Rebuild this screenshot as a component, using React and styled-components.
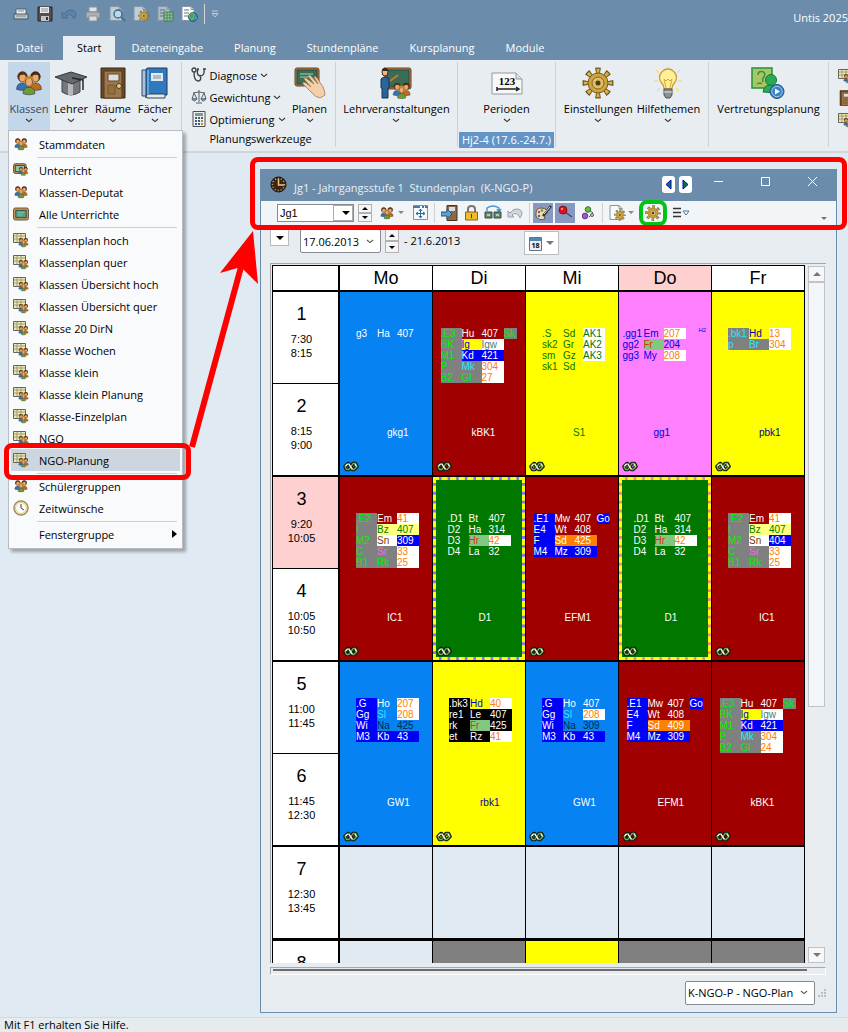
import React from 'react'
import styled, { createGlobalStyle } from 'styled-components'

const GlobalStyle = createGlobalStyle`
  * { box-sizing: border-box; }
  body {
    margin: 0;
    overflow: hidden;
    font-family: "Open Sans", "Noto Sans", sans-serif;
    font-size: 11px;
    color: #000;
  }
  button, select, input {
    font: inherit;
    color: inherit;
    margin: 0;
    padding: 0;
    border: 0;
    background: none;
  }
  svg { display: block; flex: none; }
`

const App = () => (
  <>
    <GlobalStyle />
    <Page>
      <TitleBar>
        <QuickAccess>
          {quickItems.map(({ name, icon }) => (
            <QuickButton key={name} aria-label={name}>{icon}</QuickButton>
          ))}
          <QuickMore aria-label='Mehr'>
            <svg width='8' height='8' viewBox='0 0 8 8'><path d='M1 1h6M1 3.5h6L4 7z' fill='none' stroke='#d4c8c4' /></svg>
          </QuickMore>
        </QuickAccess>
        <AppName>Untis 2025</AppName>
      </TitleBar>
      <Tabs>
        {tabs.map(tab => <Tab key={tab} $active={tab === 'Start'}>{tab}</Tab>)}
      </Tabs>
      <Ribbon />
      <Workspace>
        <TimetableWindow />
      </Workspace>
      <StatusBar>Mit F1 erhalten Sie Hilfe.</StatusBar>
      <KlassenMenu />
      <WindowMark />
      <Arrow width='60' height='218' viewBox='0 0 60 218'>
        <path d='M3 216L52 36' stroke='#f00' strokeWidth='6' />
        <path d='M64 0L31 42L52 36L69 53z' fill='#f00' />
      </Arrow>
    </Page>
  </>
)

const Page = styled.div`
  position: relative;
  display: flex;
  flex-direction: column;
  height: 100vh;
  background: #e0eaf3;
  overflow: hidden;
`
const TitleBar = styled.header`
  display: flex;
  align-items: center;
  height: 36px;
  padding: 0 0 8px 10px;
  background: #6b8dab;
`
const QuickAccess = styled.div`
  display: flex;
  align-items: center;
  gap: 2px;
`
const QuickButton = styled.button`
  display: grid;
  place-items: center;
  width: 22px;
  height: 20px;
`
const QuickMore = styled.button`
  height: 20px;
  margin-left: 2px;
  padding-left: 6px;
  border-left: 1px solid #d8d4d4;
`
const AppName = styled.span`
  margin-left: auto;
  padding-top: 6px;
  color: #fff;
  white-space: nowrap;
`
const Tabs = styled.nav`
  display: flex;
  gap: 1px;
  height: 24px;
  padding-left: 1px;
  background: #6b8dab;
`
const Tab = styled.button`
  padding: 0 15px 1px;
  color: #fff;
  ${props => props.$active && `
    margin-left: 4px;
    padding: 0 14px 1px;
    background: #e8edf1;
    color: #000;
  `}
`
const StatusBar = styled.footer`
  height: 15px;
  padding-left: 4px;
  line-height: 13px;
  border-top: 1px solid #d8d8dc;
  background: #e6ebee;
`
const WindowMark = styled.div`
  position: absolute;
  top: 157px;
  left: 250px;
  right: 1px;
  height: 73px;
  border: 5px solid #f00;
  border-radius: 8px;
  pointer-events: none;
`
const Arrow = styled.svg`
  position: absolute;
  top: 231px;
  left: 189px;
  overflow: visible;
  pointer-events: none;
`

/* Icons */

const Chevron = ({ color = '#333' }) => (
  <svg width='8' height='5' viewBox='0 0 8 5'><path d='M1 1l3 2.6L7 1' fill='none' stroke={color} strokeWidth='1.1' /></svg>
)
const Triangle = ({ color = '#000', up, size = 8 }) => (
  <svg width={size} height={size / 2} viewBox='0 0 8 4'><path d={up ? 'M0 4L4 0L8 4z' : 'M0 0L4 4L8 0z'} fill={color} /></svg>
)

const PersonShape = ({ x, y, hair, body }) => (
  <g transform={`translate(${x} ${y})`}>
    <path d='M-5.500 12Q-5.500 6 0 6T5.500 12Q0 14-5.500 12' fill={body} stroke='#3b3f48' strokeWidth='.6' />
    <circle r='4.800' fill={hair} />
    <ellipse cy='1.200' rx='3.200' ry='3.900' fill='#e5ab72' stroke='#6c3d18' strokeWidth='.7' />
    <path d='M-3.500-1Q0-5 3.500-1L1-2z' fill={hair} />
  </g>
)
const People = ({ size = 26 }) => (
  <svg width={size} height={size} viewBox='0 0 26 26'>
    <PersonShape x={7} y={7} hair='#5a2b10' body='#3572b0' />
    <PersonShape x={19} y={7} hair='#48220f' body='#c06a1c' />
    <PersonShape x={13} y={11} hair='#c98f35' body='#6c9c33' />
  </svg>
)
const Cap = () => (
  <svg width='32' height='32' viewBox='0 0 32 32'>
    <path d='M7 13h18v12q-9 6-18 0z' fill='#74777c' stroke='#424448' />
    <path d='M13 16h5v12h-5z' fill='#b5b8bc' />
    <path d='M0 10L16 5L32 10L17 17z' fill='#66696e' stroke='#35373b' />
    <path d='M17 11L28 13V23' fill='none' stroke='#26282b' strokeWidth='1.500' />
  </svg>
)
const Door = ({ size = 32 }) => (
  <svg width={size} height={size} viewBox='0 0 32 32'>
    <path d='M4 1h24v30H4z' fill='#6b4a2b' stroke='#38260f' />
    <path d='M7 4h18v27H7z' fill='#9d7649' stroke='#513820' />
    <path d='M11 7h11v7H11z' fill='#dbe0df' stroke='#5f4b30' />
    <path d='M11 18h7v9h-7z' fill='#94703f' stroke='#765630' />
    <circle cx='22' cy='19' r='2.500' fill='#e7ce7e' stroke='#4a391c' />
  </svg>
)
const Books = () => (
  <svg width='32' height='32' viewBox='0 0 32 32'>
    <path d='M3 3h21v26H3z' fill='#a9c3dc' stroke='#32495f' />
    <path d='M7 3q0-2 2-2h19v27H9q-2 0-2 3z' fill='#2f79c1' stroke='#1e3853' />
    <path d='M7 29q1-3 4-2h15v4H8z' fill='#e6e9e9' stroke='#29445f' />
    <path d='M12 6h12v8H12z' fill='#e4ebf0' />
    <path d='M14 9h8M14 11h8' stroke='#7d8c99' />
    <path d='M9 3v24' stroke='#79b2e4' strokeWidth='1.500' />
  </svg>
)
const Stethoscope = () => (
  <svg width='16' height='16' viewBox='0 0 16 16' fill='none' stroke='#3f4246' strokeWidth='1.400'>
    <circle cx='3' cy='3' r='2' /><path d='M3 5Q3 14 7 14T9 8M7 2q-2 6 2 7q5 0 4-7M6 2h2M12 2h3' />
  </svg>
)
const Scales = () => (
  <svg width='16' height='16' viewBox='0 0 16 16' fill='none' stroke='#55616a'>
    <path d='M8 1v12M2 4Q8 2 14 4M5 14h6M3 4L1 10h5zM13 4L10 10h5z' /><path d='M1 10q2 4 5 0zM10 10q2 4 5 0z' fill='#a9bcc9' />
  </svg>
)
const Calculator = () => (
  <svg width='16' height='16' viewBox='0 0 16 16'>
    <path d='M2 .5h12v15H2z' fill='#f0f1f0' stroke='#494f55' />
    <path d='M4 2h8v3H4z' fill='#7c9b88' />
    <path d='M4 7h2M7 7h2M10 7h2M4 10h2M7 10h2M4 13h2M7 13h2' stroke='#3e5e80' strokeWidth='1.800' />
    <path d='M10 10h2M10 13h2' stroke='#c18a25' strokeWidth='1.800' />
  </svg>
)
const BoardShape = ({ w = 26, h = 18 }) => (
  <g><rect x='1' y='1' width={w} height={h} rx='2' fill='#b47c43' stroke='#664224' /><rect x='3' y='3' width={w - 4} height={h - 4} fill='#386c55' stroke='#264c3c' /></g>
)
const Board = () => (
  <svg width='16' height='14' viewBox='0 0 28 23'>
    <rect x='1' y='1' width='26' height='21' rx='3' fill='#c89a55' stroke='#5e3f20' strokeWidth='1.500' />
    <rect x='5' y='5' width='18' height='13' fill='#55a08a' stroke='#24473a' strokeWidth='1.500' />
    <path d='M8 9h12M8 13h9' stroke='#a6dcc0' />
  </svg>
)
const HandBoard = () => (
  <svg width='32' height='32' viewBox='0 0 32 32'>
    <BoardShape w={24} h={18} /><path d='M6 7h13M6 10h9' stroke='#a7d4b5' />
    <path d='M9 17Q8 14 12 16L17 20L10 12Q10 10 12 11L20 17L14 9Q15 7 17 9L24 17L20 10Q21 8 23 11L29 20Q31 24 31 28L26 31Q21 30 17 25z' fill='#f4d0aa' stroke='#a57552' strokeWidth='.8' />
  </svg>
)
const Teacher = () => (
  <svg width='32' height='32' viewBox='0 0 32 32'>
    <g transform='translate(4)'><BoardShape w={26} h={21} /></g>
    <path d='M10 14L18 8' stroke='#c97340' strokeWidth='2' />
    <path d='M1 12q4-4 8 0v9H8v10H2V21H1z' fill='#2c6398' stroke='#173452' />
    <ellipse cx='5' cy='5' rx='3' ry='4' fill='#eaba87' stroke='#432414' />
    <path d='M2 4q3-7 6 0z' fill='#48220f' />
    <g transform='translate(12 14) scale(.74)'><People size={26} /></g>
  </svg>
)
const Numbers = () => (
  <svg width='32' height='32' viewBox='0 0 32 32'>
    <path d='M1 6h24l6 6v15H1z' fill='#f8f8f8' stroke='#92989c' /><path d='M25 6v6h6' fill='#dadddf' stroke='#92989c' />
    <text x='16' y='18' fontFamily='Liberation Serif, serif' fontSize='11' fontWeight='bold' textAnchor='middle'>123</text>
    <path d='M6 22h21M6 20v4M25 20l3 2l-3 2' stroke='#222' fill='none' strokeWidth='1.500' />
  </svg>
)
const GearShape = () => (
  <g>
    <circle cx='16' cy='16' r='12.500' fill='none' stroke='#6d5520' strokeWidth='6' pathLength='16' strokeDasharray='1 1' strokeDashoffset='.5' />
    <circle cx='16' cy='16' r='12' fill='none' stroke='#d8b04b' strokeWidth='4.500' pathLength='32' strokeDasharray='1.200 2.800' strokeDashoffset='.6' />
    <circle cx='16' cy='16' r='10' fill='#cda441' stroke='#76591b' />
    <circle cx='16' cy='16' r='6' fill='#dfbe60' stroke='#86672a' />
    <circle cx='16' cy='16' r='2.500' fill='#4d3d1b' />
  </g>
)
const Gear = ({ size = 32 }) => <svg width={size} height={size} viewBox='0 0 32 32'><GearShape /></svg>
const Bulb = () => (
  <svg width='32' height='32' viewBox='0 0 32 32'>
    <path d='M16 0v3M4 3l3 3M28 3l-3 3M2 14h4M26 14h4M5 24l3-3M27 24l-3-3' stroke='#f5d36b' />
    <path d='M12 22Q12 18 9 15Q6 10 9 6Q12 2 16 2T23 6Q26 10 23 15Q20 18 20 22z' fill='#fff09a' stroke='#cf9d31' strokeWidth='1.300' />
    <path d='M14 21L12 12L14 14L16 12L18 14L20 12L18 21' fill='none' stroke='#dfa43a' />
    <path d='M12 22h8v6l-2 3h-4l-2-3z' fill='#8b9093' stroke='#4d5255' /><path d='M12 25h8' stroke='#dce0e1' />
  </svg>
)
const Cover = () => (
  <svg width='34' height='32' viewBox='0 0 34 32'>
    <rect x='1' y='1' width='20' height='20' fill='#a8c762' stroke='#2d954a' strokeWidth='1.600' />
    <path d='M7 8Q7 4 11 4.500T13 10Q11 11 12 15M6 17q3-2 5 0' fill='none' stroke='#3a8f48' strokeWidth='1.500' />
    <circle cx='20' cy='13' r='5.500' fill='#2aaa52' stroke='#17773b' /><path d='M12 25Q13 18 19 18T27 26z' fill='#2aaa52' stroke='#17773b' />
    <circle cx='26' cy='24.500' r='7' fill='#3982c5' stroke='#235785' /><circle cx='26' cy='24.500' r='5.200' fill='none' stroke='#9ac6ec' /><path d='M24 21.500l5 3l-5 3z' fill='#fff' />
  </svg>
)
const PlanTable = () => (
  <svg width='16' height='16' viewBox='0 0 16 16'>
    <path d='M.500 1.500h12v9H.500z' fill='#ece9b6' stroke='#65655a' /><path d='M1 4h11M1 7h11M4 2v8M8 2v8' stroke='#a09d74' />
    <g transform='translate(5 5) scale(.420)'><People size={26} /></g>
  </svg>
)
const BoardPeople = () => (
  <svg width='16' height='14' viewBox='0 0 28 24'>
    <rect x='1' y='1' width='22' height='17' rx='3' fill='#c89a55' stroke='#5e3f20' strokeWidth='1.500' />
    <rect x='4' y='4' width='16' height='11' fill='#8fc0b0' stroke='#24473a' strokeWidth='1.500' />
    <g transform='translate(9 5) scale(.700)'><People size={26} /></g>
  </svg>
)
const Clock = () => (
  <svg width='16' height='16' viewBox='0 0 16 16'><circle cx='8' cy='8' r='7' fill='#f9fbfc' stroke='#a1905a' strokeWidth='1.500' /><circle cx='8' cy='8' r='5.500' fill='none' stroke='#e4ce76' /><path d='M8 4v4l3 2' fill='none' stroke='#444' /></svg>
)
const Folder = () => (
  <svg width='16' height='16' viewBox='0 0 16 16'><path d='M3 3h10v6H3z' fill='#edf1f3' stroke='#52616c' /><path d='M1 8h14v5H1z' fill='#c2cbd1' stroke='#475560' /><path d='M5 5h6M3 10h10' stroke='#7c8992' /></svg>
)
const Save = () => (
  <svg width='16' height='16' viewBox='0 0 16 16'><path d='M1 1h14v14H1z' fill='#55504d' stroke='#262524' /><path d='M3 1h9v6H3z' fill='#eceeee' /><path d='M4 10h8v5H4z' fill='#c0c4c6' /><path d='M9 11h2v3H9z' fill='#333' /><path d='M4 3h7M4 5h7' stroke='#9c8b8b' /></svg>
)
const Undo = ({ color = '#6187ac' }) => (
  <svg width='17' height='14' viewBox='0 0 17 14'><path d='M1 5v6h6L5 9q5-4 8 3q5-7-2-9Q7 2 3 7z' fill={color} fillOpacity='.35' stroke={color} /></svg>
)
const Printer = () => (
  <svg width='16' height='16' viewBox='0 0 16 16'><path d='M4 1h8v5H4zM4 10h8v5H4z' fill='#dfe2e5' stroke='#88929c' /><path d='M1 6h14v6H1z' fill='#aab1b8' stroke='#7d8790' /><path d='M4 10h8v5H4z' fill='#d8dcdf' stroke='#88929c' /></svg>
)
const Sheet = ({ children, back = '#d9e3ea' }) => (
  <svg width='17' height='16' viewBox='0 0 17 16'><path d='M1 .500h9l3 3v11H1z' fill={back} stroke='#8596a4' /><path d='M10 .500v3h3' fill='none' stroke='#8596a4' />{children}</svg>
)
const MiniGear = () => <g transform='translate(5 4) scale(.370)'><GearShape /></g>
const quickItems = [
  { name: 'Öffnen', icon: <Folder /> },
  { name: 'Speichern', icon: <Save /> },
  { name: 'Rückgängig', icon: <Undo color='#466f9a' /> },
  { name: 'Drucken', icon: <Printer /> },
  { name: 'Vorschau', icon: <Sheet back='#bfcdd9'><circle cx='9' cy='8' r='4' fill='#b6d9ed' stroke='#3c6287' strokeWidth='1.300' /><path d='M12 11l4 4' stroke='#4d6d8e' strokeWidth='2' /></Sheet> },
  { name: 'Optionen', icon: <Sheet back='#bfcdd9'><MiniGear /></Sheet> },
  { name: 'Kopieren', icon: <Sheet back='#adbdca'><path d='M3 4h5M3 7h4M3 10h4' stroke='#5e7387' /><path d='M7 6h9v9H7z' fill='#9bc6a0' stroke='#3e7a4d' /><path d='M7 9h9M7 12h9M10 6v9M13 6v9' stroke='#4b8a58' /></Sheet> },
  { name: 'Export', icon: <Sheet back='#fff'><path d='M3 4h5M3 7h5M3 10h4' stroke='#657681' /><circle cx='12' cy='11' r='4.500' fill='#3c85bc' stroke='#275d7f' /><path d='M8 10q4-5 5-1l-2 5zM13 12h3' fill='#48a04c' stroke='#6cc35b' /></Sheet> },
]
const tabs = ['Datei', 'Start', 'Dateneingabe', 'Planung', 'Stundenpläne', 'Kursplanung', 'Module']

/* Ribbon */

const RibbonBar = styled.div`
  display: flex;
  flex: none;
  height: 93px;
  padding: 2px 0 4px 1px;
  border-bottom: 2px solid #d2d4d8;
  background: #e8edf1;
  overflow: hidden;
`
const Group = styled.section`
  display: flex;
  flex: none;
  justify-content: center;
  flex-wrap: wrap;
  align-content: flex-start;
  column-gap: ${props => props.$gap || 0}px;
  width: ${props => props.$width}px;
  padding-left: ${props => props.$left || 0}px;
  border-right: 1px solid #ccd1d6;
`
const BigButton = styled.button`
  display: flex;
  flex-direction: column;
  align-items: center;
  gap: 2px;
  min-width: 42px;
  height: 68px;
  padding-top: 5px;
  line-height: 15px;
  white-space: nowrap;
  ${props => props.$open && 'background: #c3d6ea; color: #3c4654;'}
`
const BigIcon = styled.span`
  display: grid;
  place-items: center;
  height: 32px;
`
const ToolStack = styled.div`
  display: flex;
  flex-direction: column;
  width: 98px;
  padding-top: 2px;
`
const ToolButton = styled.button`
  display: flex;
  align-items: center;
  gap: 3px;
  height: 22px;
`
const GroupTitle = styled.div`
  width: 100%;
  margin-top: ${props => (props.$chip ? 2 : 1)}px;
  line-height: 16px;
  text-align: center;
`
const PeriodChip = styled.span`
  display: inline-block;
  padding: 0 3px;
  background: #6494c6;
  color: #fff;
`
const EdgeIcons = styled.div`
  display: flex;
  flex-direction: column;
  gap: 6px;
  padding: 6px 0 0 9px;
`
const BigItem = ({ label, icon, open, plain }) => (
  <BigButton $open={open}>
    <BigIcon>{icon}</BigIcon>
    <span>{label}</span>
    {!plain && <Chevron />}
  </BigButton>
)
const Ribbon = () => (
  <RibbonBar>
    <Group $width={181} $left={2}>
      <BigItem label='Klassen' icon={<People size={28} />} open />
      <BigItem label='Lehrer' icon={<Cap />} />
      <BigItem label='Räume' icon={<Door />} />
      <BigItem label='Fächer' icon={<Books />} />
    </Group>
    <Group $width={154} $left={4}>
      <ToolStack>
        <ToolButton><Stethoscope />Diagnose<Chevron /></ToolButton>
        <ToolButton><Scales />Gewichtung<Chevron /></ToolButton>
        <ToolButton><Calculator />Optimierung<Chevron /></ToolButton>
      </ToolStack>
      <BigItem label='Planen' icon={<HandBoard />} />
      <GroupTitle>Planungswerkzeuge</GroupTitle>
    </Group>
    <Group $width={122}>
      <BigItem label='Lehrveranstaltungen' icon={<Teacher />} />
    </Group>
    <Group $width={98}>
      <BigItem label='Perioden' icon={<Numbers />} />
      <GroupTitle $chip><PeriodChip>Hj2-4 (17.6.-24.7.)</PeriodChip></GroupTitle>
    </Group>
    <Group $width={153} $gap={4}>
      <BigItem label='Einstellungen' icon={<Gear />} />
      <BigItem label='Hilfethemen' icon={<Bulb />} />
    </Group>
    <Group $width={120}>
      <BigItem label='Vertretungsplanung' icon={<Cover />} plain />
    </Group>
    <EdgeIcons>
      <PlanTable />
      <Door size={16} />
      <PlanTable />
    </EdgeIcons>
  </RibbonBar>
)

/* Drop-down menu under "Klassen" */

const Menu = styled.div`
  position: absolute;
  top: 130px;
  left: 8px;
  width: 175px;
  padding: 2px 2px 3px;
  border: 1px solid #b9bcc2;
  background: #f8fafc;
  box-shadow: 3px 3px 3px rgba(0, 0, 0, 0.3);
`
const MenuItem = styled.button`
  display: flex;
  align-items: center;
  gap: 10px;
  width: 100%;
  height: 22px;
  padding-left: 2px;
  text-align: left;
  ${props => props.$selected && 'background: #cdd6de;'}
`
const MenuIcon = styled.span`
  display: grid;
  place-items: center;
  width: 16px;
`
const MenuLine = styled.hr`
  height: 1px;
  margin: 2px 3px 1px 26px;
  border: 0;
  background: #cdd0d4;
`
const SubArrow = styled.svg`
  margin: 0 3px 0 auto;
`
const ItemMark = styled.div`
  position: absolute;
  top: 312px;
  left: -5px;
  right: -9px;
  height: 37px;
  border: 5px solid #f00;
  border-radius: 8px;
  pointer-events: none;
`
const menuItems = [
  ['Stammdaten', 'people'], null,
  ['Unterricht', 'boardPeople'], ['Klassen-Deputat', 'people'], ['Alle Unterrichte', 'board'], null,
  ['Klassenplan hoch', 'plan'], ['Klassenplan quer', 'plan'], ['Klassen Übersicht hoch', 'plan'],
  ['Klassen Übersicht quer', 'plan'], ['Klasse 20 DirN', 'plan'], ['Klasse Wochen', 'plan'],
  ['Klasse klein', 'plan'], ['Klasse klein Planung', 'plan'], ['Klasse-Einzelplan', 'plan'],
  ['NGO', 'plan'], ['NGO-Planung', 'plan'], null,
  ['Schülergruppen', 'people'], ['Zeitwünsche', 'clock'], null,
  ['Fenstergruppe', 'none'],
]
const menuIcons = {
  people: <People size={14} />,
  boardPeople: <BoardPeople />,
  board: <Board />,
  plan: <PlanTable />,
  clock: <Clock />,
}
const KlassenMenu = () => (
  <Menu>
    {menuItems.map((item, i) => item ? (
      <MenuItem key={item[0]} $selected={item[0] === 'NGO-Planung'}>
        <MenuIcon>{menuIcons[item[1]]}</MenuIcon>
        {item[0]}
        {item[1] === 'none' && <SubArrow width='5' height='8' viewBox='0 0 5 8'><path d='M0 0L5 4L0 8z' /></SubArrow>}
      </MenuItem>
    ) : <MenuLine key={i} />)}
    <ItemMark />
  </Menu>
)

/* Timetable window */

const Workspace = styled.main`
  display: flex;
  flex: 1;
  min-height: 0;
  padding: 16px 11px 4px 260px;
`
const Window = styled.section`
  display: flex;
  flex: 1;
  flex-direction: column;
  min-width: 0;
  border: 1px solid #6b8dab;
  background: #e6ecf0;
`
const WindowTitle = styled.div`
  display: flex;
  align-items: flex-start;
  flex: none;
  height: 31px;
  padding: 6px 18px 0 9px;
  background: #6b8dab;
  color: #e9f0f6;
  white-space: pre;
`
const TitleText = styled.span`
  padding: 4px 0 0 7px;
  flex: 1;
`
const NavButton = styled.button`
  display: grid;
  place-items: center;
  width: 13px;
  height: 17px;
  margin-right: 4px;
  border-radius: 3px;
  background: #fff;
`
const WindowButtons = styled.div`
  display: flex;
  gap: 36px;
  margin-left: 17px;
`
const WindowButton = styled.button`
  width: 11px;
  height: 11px;
`
const Toolbar = styled.div`
  display: flex;
  align-items: center;
  flex: none;
  height: 25px;
  padding: 0 9px 2px 16px;
  background: #f2f5f8;
`
const Tool = styled.button`
  display: grid;
  place-items: center;
  flex: none;
  width: 22px;
  height: 20px;
  ${props => props.$pressed && 'width: 20px; margin-right: 2px; background: #8798c1;'}
  ${props => props.$ringed && `
    width: 28px;
    height: 26px;
    margin-right: 3px;
    border: 4px solid #00c414;
    border-radius: 8px;
  `}
`
const Caret = styled.button`
  width: 8px;
  margin: 0 3px 0 0;
`
const Line = styled.span`
  width: 1px;
  height: 20px;
  margin: 0 3px;
  background: #cdd1d6;
`
const LastCaret = styled.button`
  align-self: flex-end;
  height: 12px;
  margin-left: auto;
`
const SelectBox = styled.span`
  display: grid;
  grid-template-columns: 1fr 20px;
  align-items: center;
  justify-items: center;
  width: ${props => props.$width}px;
  height: ${props => props.$height}px;
  border: 1px solid #878b91;
  border-radius: ${props => (props.$flat ? 0 : 2)}px;
  background: #fff;
  select {
    appearance: none;
    grid-area: 1 / 1 / 2 / 3;
    width: 100%;
    padding-left: 2px;
    outline: 0;
    ${props => props.$flat && 'font-family: "Liberation Sans", Arial, sans-serif;'}
  }
  svg {
    grid-area: 1 / 2;
    pointer-events: none;
  }
`
const FlatArrow = styled.span`
  display: grid;
  place-items: center;
  grid-area: 1 / 2;
  width: 20px;
  height: 16px;
  border: 1px solid #a9adb2;
  pointer-events: none;
`
const Spinner = styled.span`
  display: flex;
  flex-direction: column;
  width: 14px;
  margin: 0 ${props => props.$gap}px 0 4px;
`
const SpinButton = styled.button`
  display: grid;
  place-items: center;
  height: ${props => props.$height}px;
  border: 1px solid #b5b0b0;
  background: #f3f5f7;
`
const DateRow = styled.div`
  display: flex;
  align-items: flex-start;
  flex: none;
  height: 37px;
  padding: 3px 10px 0 9px;
`
const DropButton = styled.button`
  display: grid;
  place-items: center;
  width: 19px;
  height: 17px;
  margin-right: 11px;
  border: 1px solid #b7bbc0;
  background: #fff;
`
const DateEnd = styled.span`
  width: 120px;
  padding-top: 4px;
`
const MonthButton = styled.button`
  display: flex;
  align-items: center;
  justify-content: center;
  gap: 4px;
  width: 35px;
  height: 24px;
  margin-top: 2px;
  border: 1px solid #babdc2;
  background: #fff;
`
const Frame = styled.div`
  display: flex;
  flex: 1;
  min-height: 0;
  gap: 3px;
  margin: 0 10px 0 9px;
  padding: 1px 1px 0 1px;
  border: 1px solid #a5a5a8;
  border-width: 1px 0 0 1px;
`
const Plan = styled.div`
  flex: 1;
  min-width: 0;
  overflow: hidden;
`
const ScrollBar = styled.div`
  display: flex;
  flex-direction: column;
  flex: none;
  width: 17px;
  padding-top: 1px;
  background: #e9edf0;
`
const ScrollButton = styled.button`
  display: grid;
  place-items: center;
  flex: none;
  height: 16px;
  border: 1px solid #c0c2c6;
  background: #f5f7f9;
`
const Thumb = styled.div`
  height: 61%;
  margin-bottom: auto;
  border: 1px solid #c0c2c8;
  background: #f3f6f9;
`
const BottomTrack = styled.div`
  flex: none;
  height: 8px;
  margin: 4px 10px 0 9px;
  padding: 1px 18px 0 2px;
  border: 1px solid #a8a8a8;
  border-right-color: #fff;
  border-bottom-color: #fff;
`
const TrackLine = styled.div`
  height: 2px;
  background: #6d6c73;
`
const WindowFoot = styled.div`
  display: flex;
  align-items: center;
  justify-content: flex-end;
  flex: none;
  gap: 3px;
  height: 37px;
  padding: 0 10px 2px 0;
`

const TimetableWindow = () => (
  <Window>
    <WindowTitle>
      <svg width='17' height='17' viewBox='0 0 17 17'><circle cx='8.500' cy='8.500' r='7.500' fill='#3a2514' stroke='#15110e' /><circle cx='8.500' cy='8.500' r='6' fill='none' stroke='#e0a65e' strokeWidth='1.500' strokeDasharray='1 2' /><path d='M8.500 3v6H14' fill='none' stroke='#f2c286' strokeWidth='1.500' /></svg>
      <TitleText>{'Jg1 - Jahrgangsstufe 1  Stundenplan  (K-NGO-P)'}</TitleText>
      <NavButton aria-label='Zurück'><svg width='7' height='11' viewBox='0 0 7 11'><path d='M6 1L1 5.500L6 10z' fill='#08783a' stroke='#0000c8' /></svg></NavButton>
      <NavButton aria-label='Weiter'><svg width='7' height='11' viewBox='0 0 7 11'><path d='M1 1L6 5.500L1 10z' fill='#08783a' stroke='#0000c8' /></svg></NavButton>
      <WindowButtons>
        <WindowButton aria-label='Minimieren'><svg width='11' height='11' viewBox='0 0 11 11'><path d='M1 5.500h9' stroke='#fff' /></svg></WindowButton>
        <WindowButton aria-label='Maximieren'><svg width='11' height='11' viewBox='0 0 11 11'><path d='M1.500 1.500h8v8h-8z' fill='none' stroke='#fff' /></svg></WindowButton>
        <WindowButton aria-label='Schließen'><svg width='11' height='11' viewBox='0 0 11 11'><path d='M1 1l9 9M10 1l-9 9' stroke='#fff' /></svg></WindowButton>
      </WindowButtons>
    </WindowTitle>
    <Toolbar>
      <SelectBox $width={77} $height={18} $flat>
        <select aria-label='Klasse'><option>Jg1</option></select>
        <FlatArrow><Triangle size={8} /></FlatArrow>
      </SelectBox>
      <Spinner $gap={4}>
        <SpinButton $height={9} aria-label='Vorherige Klasse'><Triangle up size={6} /></SpinButton>
        <SpinButton $height={9} aria-label='Nächste Klasse'><Triangle size={6} /></SpinButton>
      </Spinner>
      <Tool aria-label='Klassen'><People size={14} /></Tool>
      <Caret aria-label='Klassen wählen'><Triangle size={6} color='#888' /></Caret>
      <Tool aria-label='Anpassen'><svg width='15' height='15' viewBox='0 0 15 15'><path d='M.500 .500h14v14H.500z' fill='#f4f8fb' stroke='#7995a9' /><path d='M0 2h15' stroke='#47799d' strokeWidth='2' strokeDasharray='7 2 2 1' /><path d='M7.500 4v9M3 8.500h9M6 6l1.500-2L9 6M6 11l1.500 2L9 11M5 7L3 8.500L5 10M10 7l2 1.500L10 10' fill='none' stroke='#246ca0' /></svg></Tool>
      <Line />
      <Tool aria-label='Raum'><svg width='17' height='16' viewBox='0 0 17 16'><path d='M6 .500h10v15H6z' fill='#8d6840' stroke='#49331e' /><path d='M8 2h6v4H8z' fill='#d6dfdf' /><path d='M0 7h6V4l5 5l-5 5v-3H0z' fill='#5ba0d6' stroke='#24577f' /></svg></Tool>
      <Tool aria-label='Fixieren'><svg width='13' height='16' viewBox='0 0 13 16'><path d='M3 7V4q0-3 3.500-3T10 4v3' fill='none' stroke='#777' strokeWidth='2' /><path d='M.500 7h12v8H.500z' fill='#eebd2b' stroke='#8c6513' /><path d='M6 9h1v4H6z' fill='#513b12' /></svg></Tool>
      <Tool aria-label='Tausch'><svg width='18' height='15' viewBox='0 0 18 15'><path d='M3 6V3q6-4 12 0v3M13 4l2 3l2-3' fill='none' stroke='#4d98cf' strokeWidth='1.500' /><path d='M1 7h7v6H1zM10 7h7v6h-7z' fill='#66856d' stroke='#324c40' /><path d='M3 10h3M12 10h3' stroke='#acd0ae' strokeWidth='2' /></svg></Tool>
      <Tool aria-label='Rückgängig'><Undo color='#9ba1a8' /></Tool>
      <Line />
      <Tool $pressed aria-label='Farben'><svg width='17' height='16' viewBox='0 0 17 16'><path d='M1 8Q1 3 7 3Q13 4 12 8L9 10L10 14Q3 16 1 11z' fill='#ecdfb6' stroke='#6b5736' /><circle cx='4' cy='7' r='1.300' fill='#d6423f' /><circle cx='7' cy='5.500' r='1.300' fill='#4f9540' /><circle cx='4' cy='11' r='1.300' fill='#376fcf' /><path d='M8 11L16 1' stroke='#37312e' strokeWidth='2.500' /><path d='M9 9L15 2' stroke='#ddd' /></svg></Tool>
      <Tool $pressed aria-label='Stecknadel'><svg width='15' height='15' viewBox='0 0 15 15'><path d='M7 7l7 5' stroke='#4f4960' strokeWidth='1.500' /><circle cx='5' cy='5' r='4' fill='#e11119' stroke='#84131f' /><circle cx='4' cy='4' r='1' fill='#ffaeb0' /></svg></Tool>
      <Tool aria-label='Kopplung'><svg width='13' height='14' viewBox='0 0 13 14'><path d='M7 4l4 3l-4 4' fill='none' stroke='#555' /><circle cx='6' cy='3.500' r='2.800' fill='#61bd45' stroke='#2f7628' /><circle cx='3' cy='10' r='2.800' fill='#a255cd' stroke='#663285' /><circle cx='10' cy='9' r='1.500' fill='#ddd' stroke='#555' /></svg></Tool>
      <Line />
      <Tool aria-label='Seite einrichten'><Sheet back='#f8fafb'><MiniGear /></Sheet></Tool>
      <Caret aria-label='Layout'><Triangle size={6} color='#888' /></Caret>
      <Tool $ringed aria-label='Einstellungen'><Gear size={16} /></Tool>
      <Tool aria-label='Liste'><svg width='18' height='11' viewBox='0 0 18 11'><path d='M1 1.500h8M1 5.500h8M1 9.500h8' stroke='#333' strokeWidth='1.600' /><path d='M11 4h6l-3 4z' fill='#fff' stroke='#3b78a7' /></svg></Tool>
      <LastCaret aria-label='Weitere'><Triangle size={6} color='#777' /></LastCaret>
    </Toolbar>
    <DateRow>
      <DropButton aria-label='Bereich'><Triangle size={8} /></DropButton>
      <SelectBox $width={81} $height={24}>
        <select aria-label='Datum'><option>17.06.2013</option></select>
        <Chevron color='#555' />
      </SelectBox>
      <Spinner $gap={5}>
        <SpinButton $height={12} aria-label='Woche zurück'><Triangle up size={6} /></SpinButton>
        <SpinButton $height={12} aria-label='Woche vor'><Triangle size={6} /></SpinButton>
      </Spinner>
      <DateEnd>- 21.6.2013</DateEnd>
      <MonthButton aria-label='Kalender'>
        <svg width='13' height='15' viewBox='0 0 13 15'><path d='M.500 1.500h12v13H.500z' fill='#eee' stroke='#657481' /><path d='M1 2h11v3H1z' fill='#4d87b4' /><text x='6.500' y='12' fontSize='7' fontWeight='bold' textAnchor='middle'>18</text></svg>
        <Triangle size={8} color='#777' />
      </MonthButton>
    </DateRow>
    <Frame>
      <Plan><Timetable /></Plan>
      <ScrollBar>
        <ScrollButton aria-label='Nach oben'><Triangle up color='#777' /></ScrollButton>
        <Thumb />
        <ScrollButton aria-label='Nach unten'><Triangle color='#777' /></ScrollButton>
      </ScrollBar>
    </Frame>
    <BottomTrack><TrackLine /></BottomTrack>
    <WindowFoot>
      <SelectBox $width={130} $height={24}>
        <select aria-label='Format'><option>K-NGO-P - NGO-Plan</option></select>
        <Chevron color='#555' />
      </SelectBox>
      <svg width='8' height='8' viewBox='0 0 8 8'><path d='M6 0h2v2H6zM3 3h2v2H3zM6 3h2v2H6zM0 6h2v2H0zM3 6h2v2H3zM6 6h2v2H6z' fill='#b9bdc2' /></svg>
    </WindowFoot>
  </Window>
)

/* Timetable */

const colors = {
  blue: '#0682f2',
  red: '#a00000',
  yellow: '#ffff00',
  pink: '#ff80ff',
  green: '#007800',
  grey: '#808080',
}
const Grid = styled.table`
  width: 100%;
  table-layout: fixed;
  border-collapse: separate;
  border-spacing: 0;
  border-top: 1px solid #000;
  border-left: 1px solid #000;
  font-family: "Liberation Sans", Arial, sans-serif;
  td, th { padding: 0; }
`
const DayHead = styled.th`
  width: ${props => (props.$first ? '67px' : 'auto')};
  height: 26px;
  border-right: ${props => (props.$first ? 2 : 1)}px solid #000;
  border-bottom: 2px solid #000;
  background: ${props => (props.$today ? '#ffd0d0' : '#fff')};
  font-size: 18px;
  font-weight: normal;
  line-height: 22px;
`
const TimeCell = styled.th`
  height: ${props => 91 + props.$line}px;
  border-right: 2px solid #000;
  border-bottom: ${props => props.$line}px solid #000;
  background: ${props => (props.$current ? '#ffd0d0' : '#fff')};
  font-weight: normal;
  vertical-align: top;
`
const TimeBox = styled.div`
  padding: 11px 8px 0 0;
  font-size: 11px;
  line-height: 14px;
  text-align: center;
`
const Period = styled.div`
  margin-bottom: 7px;
  font-size: 18px;
  line-height: 22px;
`
const LessonCell = styled.td`
  border-right: 1px solid #000;
  border-bottom: ${props => props.$line || 2}px solid #000;
  background: ${props => colors[props.$color] || '#e0eaf3'};
  vertical-align: top;
`
const Lesson = styled.div`
  display: flex;
  flex-direction: column;
  height: 183px;
  padding: 36px 0 3px 3px;
  color: ${props => props.$ink};
  font-size: 10px;
  line-height: 11px;
  ${props => props.$dash && `
    padding: 33px 0 0 0;
    border: 3px dashed #ff0;
    background: linear-gradient(#007800, #007800) padding-box, ${props.$dash} border-box;
  `}
`
const LessonBody = styled.div`
  align-self: center;
  flex: 1;
  margin-left: ${props => (props.$wide ? -4 : 0)}px;
`
const Entries = styled.div`
  display: grid;
  grid-template-columns: 21px 20px 22px ${props => (props.$note ? '13px 8px' : props.$wide ? '13px' : '')};
  grid-auto-rows: 11px;
  align-content: start;
  min-height: 99px;
`
const Entry = styled.span`
  color: ${props => props.$ink};
  background: ${props => props.$back};
  white-space: nowrap;
`
const Note = styled.span`
  grid-column: 5;
  font-size: 6px;
  line-height: 4px;
`
const Label = styled.div`
  padding-left: 31px;
`

// text and background colour of a single entry
const inks = {
  _: ['inherit', 'transparent'],
  lg: ['#00f000', '#808080'],
  cg: ['#20e8f8', '#808080'],
  pg: ['#f070d0', '#808080'],
  by: ['#0000e0', '#ffff00'],
  tw: ['#507878', '#fff'],
  gw: ['#007800', '#fff'],
  ow: ['#ff8000', '#fff'],
  nw: ['#783c00', '#fff'],
  wb: ['#fff', '#0000ff'],
  wk: ['#fff', '#000'],
  wo: ['#fff', '#ff8000'],
  rg: ['#e03010', '#80c880'],
  gy: ['#008000', '#ffff80'],
  c: ['#40e0ff', 'transparent'],
  k: ['#002850', 'transparent'],
}
const kbk = room => ['.E3:lg Hu 407 Sk:lg', 'BK:lg Ig:by Igw:tw', 'M1:lg Kd:wb 421:wb', 'P:lg Mk:cg 304:ow', `B2:lg Gl:lg ${room}:ow`]
const ic = room => ['.E2:lg Em 41:ow', 'I:lg Bz:gy 407:gy', `M2:lg Sn:nw ${room}:wb`, 'C:lg Sr:pg 33:ow', 'B1:lg Rk:lg 25:ow']
const efm = room => ['.E1:wb Mw 407 Go:wb', 'E4:wb Wt 408', `F:wb Sd:wo ${room}:wo`, 'M4:wb Mz:wb 309:wb']
const gw = (first, third) => [`.G:wb Ho ${first}`, 'Gg:wb Sl:c 208:ow', `Wi:wb Na:k ${third}:k`, 'M3:wb Kb:wb 43:wb']
const d1 = ['.D1 Bt 407', 'D2 Ha 314', 'D3 Hr:rg 42:ow', 'D4 La 32']

const blocks = [
  {
    times: [['1', '7:30', '8:15'], ['2', '8:15', '9:00']],
    lessons: [
      { color: 'blue', label: 'gkg1', rows: ['g3 Ha 407'] },
      { color: 'red', label: 'kBK1', rows: kbk(27), wide: true },
      { color: 'yellow', label: 'S1', ink: '#007800', rows: ['.S Sd AK1:gw', 'sk2 Gr AK2:gw', 'sm Gz AK3:gw', 'sk1 Sd'] },
      { color: 'pink', label: 'gg1', ink: '#0000e0', note: 'H2', rows: ['.gg1 Em 207:ow', 'gg2 Fr:rg 204', 'gg3 My 208:ow'] },
      { color: 'yellow', label: 'pbk1', ink: '#0000a0', rows: ['.bk1:cg Hd 13:ow', 'p:cg Br:cg 304:ow'] },
    ],
  },
  {
    times: [['3', '9:20', '10:05'], ['4', '10:05', '10:50']],
    lessons: [
      { color: 'red', label: 'IC1', rows: ic(309) },
      { color: 'green', label: 'D1', rows: d1, dash: '#7878ff' },
      { color: 'red', label: 'EFM1', rows: efm(425), wide: true },
      { color: 'green', label: 'D1', rows: d1, dash: '#ff8080' },
      { color: 'red', label: 'IC1', rows: ic(404) },
    ],
  },
  {
    times: [['5', '11:00', '11:45'], ['6', '11:45', '12:30']],
    lessons: [
      { color: 'blue', label: 'GW1', rows: gw('207:ow', 425) },
      { color: 'yellow', label: 'rbk1', ink: '#0000a0', rows: ['.bk3:wk Hd:by 40:ow', 're1:wk Le:wk 407:wk', 'rk:wk Fr:rg 425:wk', 'et:wk Rz:wk 41:ow'] },
      { color: 'blue', label: 'GW1', rows: gw('407', 309) },
      { color: 'red', label: 'EFM1', rows: efm(409), wide: true },
      { color: 'red', label: 'kBK1', rows: kbk(24), wide: true },
    ],
  },
]

const LinkSign = () => (
  <svg width='16' height='11' viewBox='0 0 16 11' fill='none' strokeLinejoin='round'>
    <path d='M5 2.500L2 5.500L3.500 8.500H6L10 2.500H12.500L14 5.500L11 8.500H9.500L5.500 2.500z' stroke='#0c1c0c' strokeWidth='3.600' />
    <path d='M5 2.500L2 5.500L3.500 8.500H6L10 2.500H12.500L14 5.500L11 8.500H9.500' stroke='#7cab60' strokeWidth='1.300' />
    <path d='M5.500 2.500L9.500 8.500M12 3L13.500 5.500M2.500 5L4.500 3' stroke='#f2f4d8' strokeWidth='1.400' />
  </svg>
)

const LessonCard = ({ lesson }) => (
  <Lesson $ink={lesson.ink || '#fff'} $dash={lesson.dash}>
    <LessonBody $wide={lesson.wide || lesson.note}>
      <Entries $wide={lesson.wide} $note={lesson.note}>
        {lesson.rows.map((row, r) => row.split(' ').map((part, c) => {
          const [text, key = '_'] = part.split(':')
          return (
            <Entry key={`${r}-${c}`} $ink={inks[key][0]} $back={inks[key][1]} style={{ gridArea: `${r + 1} / ${c + 1}` }}>
              {text}
            </Entry>
          )
        }))}
        {lesson.note && <Note>{lesson.note}</Note>}
      </Entries>
      <Label>{lesson.label}</Label>
    </LessonBody>
    <LinkSign />
  </Lesson>
)

const TimeInfo = ({ time, line, current }) => (
  <TimeCell $line={line} $current={current} scope='row'>
    <TimeBox>
      <Period>{time[0]}</Period>
      <div>{time[1]}</div>
      <div>{time[2]}</div>
    </TimeBox>
  </TimeCell>
)

const Timetable = () => (
  <Grid>
    <thead>
      <tr>
        <DayHead $first />
        {['Mo', 'Di', 'Mi', 'Do', 'Fr'].map(day => <DayHead key={day} $today={day === 'Do'} scope='col'>{day}</DayHead>)}
      </tr>
    </thead>
    <tbody>
      {blocks.map(({ times, lessons }, b) => (
        <React.Fragment key={times[0][0]}>
          <tr>
            <TimeInfo time={times[0]} line={1} current={b === 1} />
            {lessons.map((lesson, i) => (
              <LessonCell key={i} rowSpan={2} $color={lesson.color}><LessonCard lesson={lesson} /></LessonCell>
            ))}
          </tr>
          <tr><TimeInfo time={times[1]} line={2} /></tr>
        </React.Fragment>
      ))}
      <tr>
        <TimeInfo time={['7', '12:30', '13:45']} line={3} />
        {[0, 1, 2, 3, 4].map(i => <LessonCell key={i} $line={3} />)}
      </tr>
      <tr>
        <TimeInfo time={['8', '', '']} line={3} />
        {['', 'grey', 'yellow', 'grey', 'grey'].map((color, i) => <LessonCell key={i} $line={3} $color={color} />)}
      </tr>
    </tbody>
  </Grid>
)

export default App
